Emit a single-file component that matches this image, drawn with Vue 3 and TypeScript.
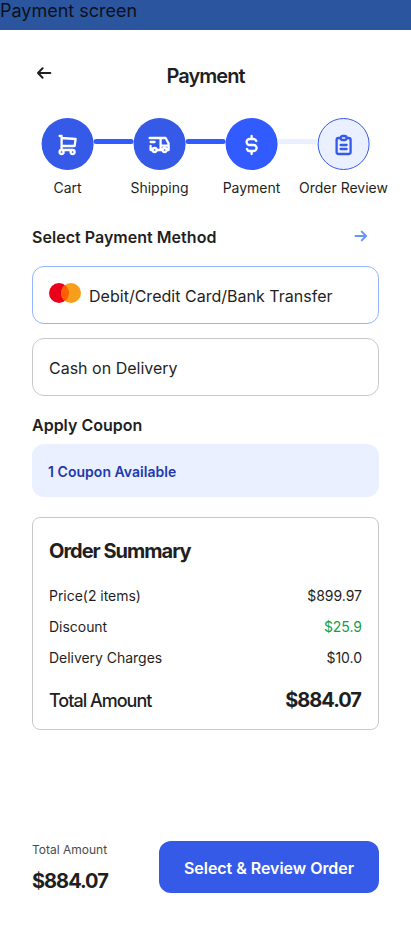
<script setup lang="ts">
interface Step {
  label: string
  icon: 'cart' | 'truck' | 'dollar' | 'clipboard'
  state: 'done' | 'current' | 'pending'
}

interface SummaryRow {
  label: string
  value: string
  positive?: boolean
}

const steps: Step[] = [
  { label: 'Cart', icon: 'cart', state: 'done' },
  { label: 'Shipping', icon: 'truck', state: 'done' },
  { label: 'Payment', icon: 'dollar', state: 'current' },
  { label: 'Order Review', icon: 'clipboard', state: 'pending' },
]

const icons: Record<Step['icon'], string> = {
  cart: 'M4 19a2 2 0 1 0 4 0a2 2 0 1 0-4 0M15 19a2 2 0 1 0 4 0a2 2 0 1 0-4 0M17 17H6V3H4M6 5l14 1l-1 7H6',
  truck: 'M5 17a2 2 0 1 0 4 0a2 2 0 1 0-4 0M15 17a2 2 0 1 0 4 0a2 2 0 1 0-4 0M5 17H3v-4M2 5h11v12m-4 0h6m4 0h2v-6.5M13 12.6h8M13 5h5l3 5.5M3 9h4',
  dollar: 'M16.7 8a3 3 0 0 0-2.7-2h-4a3 3 0 0 0 0 6h4a3 3 0 0 1 0 6h-4a3 3 0 0 1-2.7-2M12 3v3m0 12v3',
  clipboard: 'M9 5H7a2 2 0 0 0-2 2v12a2 2 0 0 0 2 2h10a2 2 0 0 0 2-2V7a2 2 0 0 0-2-2h-2M11 3h2a2 2 0 0 1 0 4h-2a2 2 0 0 1 0-4M9 12h6M9 16h6',
}

const rows: SummaryRow[] = [
  { label: 'Price(2 items)', value: '$899.97' },
  { label: 'Discount', value: '$25.9', positive: true },
  { label: 'Delivery Charges', value: '$10.0' },
]

const total = '$884.07'
</script>

<template>
  <div class="screen">
    <div class="banner">Payment screen</div>

    <header class="header">
      <svg class="back" viewBox="0 0 16 14" aria-hidden="true">
        <path d="M14.3 7H2M6.6 2.3L2 7l4.6 4.7" />
      </svg>
      <h1 class="title">Payment</h1>
    </header>

    <ol class="steps">
      <li v-for="step in steps" :key="step.label" class="step" :class="step.state">
        <div class="track">
          <span class="line"></span>
          <span class="circle">
            <svg class="glyph" viewBox="0 0 24 24" aria-hidden="true"><path :d="icons[step.icon]" /></svg>
          </span>
        </div>
        <span class="step-label">{{ step.label }}</span>
      </li>
    </ol>

    <main class="content">
      <div class="method-head">
        <h2 class="section">Select Payment Method</h2>
        <svg class="next" viewBox="0 0 14 14" aria-hidden="true">
          <path d="M1.5 7h10.6M7.7 2.6L12.1 7l-4.4 4.4" />
        </svg>
      </div>

      <div class="option selected">
        <svg class="card-logo" viewBox="0 0 32 20" aria-hidden="true">
          <circle cx="10" cy="10" r="10" fill="#eb001b" />
          <circle cx="22" cy="10" r="10" fill="#f79e1b" />
          <path d="M16 2a10 10 0 0 1 0 16a10 10 0 0 1 0-16z" fill="#ff5f00" />
        </svg>
        <span class="option-text card-text">Debit/Credit Card/Bank Transfer</span>
      </div>
      <div class="option">
        <span class="option-text">Cash on Delivery</span>
      </div>

      <h2 class="section coupon-head">Apply Coupon</h2>
      <div class="coupon">1 Coupon Available</div>

      <section class="summary">
        <h2 class="summary-title">Order Summary</h2>
        <div v-for="row in rows" :key="row.label" class="row">
          <span>{{ row.label }}</span>
          <span :class="{ positive: row.positive }">{{ row.value }}</span>
        </div>
        <div class="total-row">
          <span class="total-label">Total Amount</span>
          <span class="amount">{{ total }}</span>
        </div>
      </section>
    </main>

    <footer class="footer">
      <div class="footer-total">
        <span class="footer-label">Total Amount</span>
        <span class="amount">{{ total }}</span>
      </div>
      <button class="cta" type="button">Select &amp; Review Order</button>
    </footer>
  </div>
</template>

<style>
body {
  background: #fff;
}
</style>

<style scoped>
.screen {
  display: flex;
  flex-direction: column;
  box-sizing: border-box;
  width: 411px;
  height: 926px;
  overflow: hidden;
  background: #fff;
  color: #1f1f1f;
  font-family: Inter, 'Liberation Sans', sans-serif;
}
h1,
h2,
ol {
  margin: 0;
  padding: 0;
}
svg path {
  stroke-linecap: round;
  stroke-linejoin: round;
}
.banner {
  height: 30px;
  flex: none;
  background: #2b569f;
  color: #0b111c;
  font-size: 18px;
  line-height: 22px;
}
.header {
  display: grid;
  grid-template-columns: 1fr auto 1fr;
  height: 88px;
  box-sizing: border-box;
  padding: 34px 0 0;
}
.back {
  width: 16px;
  height: 14px;
  margin: 2px 0 0 36px;
  fill: none;
  stroke: #1f1f1f;
  stroke-width: 2;
}
.title {
  font-size: 20px;
  line-height: 24px;
  font-weight: 600;
  letter-spacing: -0.95px;
}
.steps {
  display: flex;
  list-style: none;
  margin-left: 21.5px;
  height: 82px;
}
.step {
  width: 92px;
  flex: none;
}
.track {
  position: relative;
  display: flex;
  justify-content: center;
  transform: translateX(-0.4px);
}
.line {
  position: absolute;
  top: 21px;
  left: -20px;
  width: 40px;
  height: 5px;
  border-radius: 2.5px;
  background: #325bff;
}
.step:first-child .line {
  display: none;
}
.circle {
  display: flex;
  align-items: center;
  justify-content: center;
  box-sizing: border-box;
  width: 52px;
  height: 52px;
  border-radius: 50%;
  background: #355ae8;
}
.current .circle {
  background: #325bff;
}
.pending .circle {
  background: #eaf0ff;
  border: 1px solid #355ae8;
}
.pending .line {
  background: #eaf0ff;
}
.glyph {
  width: 24px;
  height: 24px;
  margin-top: 1px;
  fill: none;
  stroke: #fff;
  stroke-width: 2.3;
}
.pending .glyph {
  stroke: #355ae8;
}
.step-label {
  display: flex;
  justify-content: center;
  margin-top: 9px;
  font-size: 14px;
  line-height: 18px;
  white-space: nowrap;
}
.content {
  padding: 0 32px;
}
.method-head {
  display: flex;
  justify-content: space-between;
  height: 66px;
  box-sizing: border-box;
  padding: 27px 11px 0 0;
}
.section {
  font-size: 16px;
  line-height: 20px;
  font-weight: 600;
  letter-spacing: 0.03px;
}
.next {
  width: 14px;
  height: 14px;
  margin-top: 2px;
  fill: none;
  stroke: #6895ff;
  stroke-width: 2;
}
.option {
  display: flex;
  align-items: center;
  box-sizing: border-box;
  height: 58px;
  padding: 2px 16px 0;
  border: 1px solid #c9c9c9;
  border-radius: 12px;
}
.option.selected {
  border-color: #93b4ff;
  margin-bottom: 14px;
}
.card-logo {
  width: 32px;
  height: 20px;
  margin: -6px 8px 0 0;
}
.option-text {
  font-size: 16px;
  line-height: 20px;
  white-space: nowrap;
}
.card-text {
  letter-spacing: 0.02px;
}
.coupon-head {
  margin: 19px 0 9px;
  letter-spacing: 0;
}
.coupon {
  height: 53px;
  box-sizing: border-box;
  padding: 18px 16px 0;
  border-radius: 12px;
  background: #eaf0ff;
  color: #1e3aaf;
  font-size: 14px;
  line-height: 20px;
  font-weight: 600;
  letter-spacing: 0.04px;
}
.summary {
  height: 213px;
  box-sizing: border-box;
  margin-top: 20px;
  padding: 21px 16px 0;
  border: 1px solid #c9c9c9;
  border-radius: 8px;
}
.summary-title {
  margin-bottom: 17px;
  font-size: 20px;
  line-height: 24px;
  font-weight: 700;
  letter-spacing: -1px;
}
.row {
  display: flex;
  justify-content: space-between;
  font-size: 14px;
  line-height: 31px;
  letter-spacing: -0.03px;
}
.positive {
  color: #12a04a;
}
.total-row {
  display: flex;
  justify-content: space-between;
  margin-top: 15px;
  padding-right: 1px;
}
.total-label {
  padding-top: 1px;
  font-size: 18px;
  line-height: 24px;
  letter-spacing: -1px;
  font-weight: 500;
}
.amount {
  font-size: 20px;
  line-height: 24px;
  font-weight: 700;
  letter-spacing: -1px;
}
.footer {
  display: flex;
  justify-content: space-between;
  margin-top: 111px;
  padding: 0 32px;
}
.footer-total {
  display: flex;
  flex-direction: column;
  gap: 11px;
  padding-top: 1px;
}
.footer-label {
  font-size: 12px;
  line-height: 16px;
  color: #4b4b4b;
}
.cta {
  width: 220px;
  height: 52px;
  padding: 2px 0 0;
  border: 0;
  border-radius: 12px;
  background: #355ae8;
  color: #fff;
  font-family: inherit;
  font-size: 16px;
  font-weight: 600;
  letter-spacing: -0.04px;
}
</style>
